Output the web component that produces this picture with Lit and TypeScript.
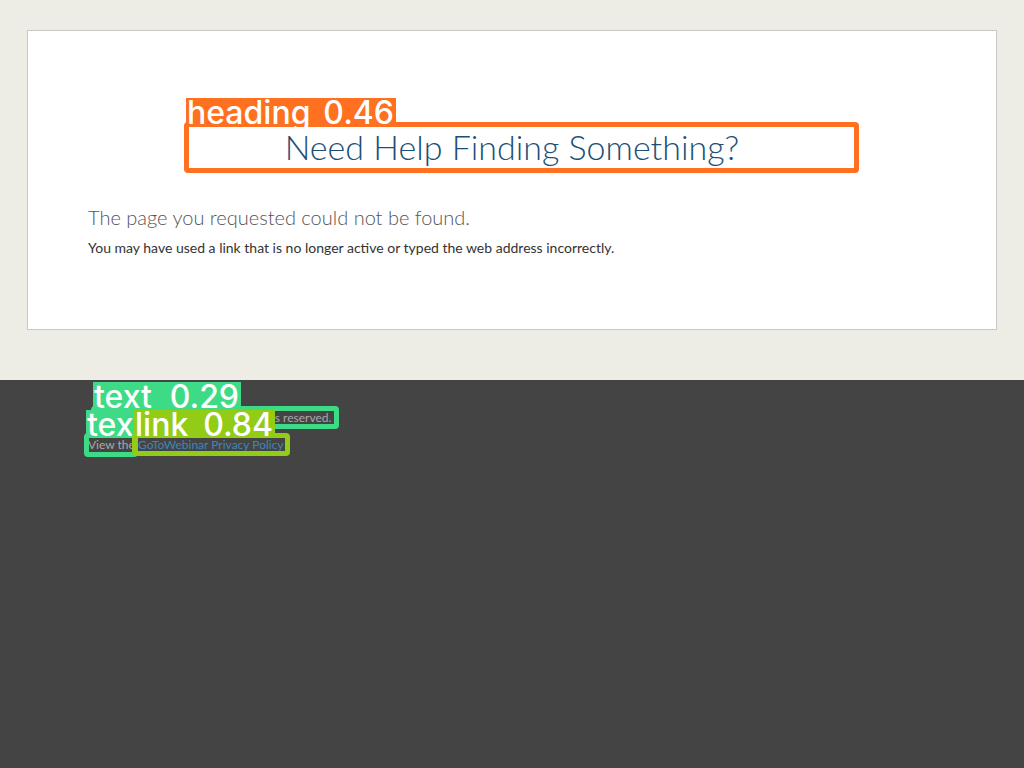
import { LitElement, html, css, nothing } from "lit";
import { customElement, property } from "lit/decorators.js";
import { styleMap } from "lit/directives/style-map.js";

interface Detection {
  name: string;
  score?: string;
  color: string;
  box: [number, number, number, number];
  tag: [number, number, number, number];
}

const detections: Detection[] = [
  { name: "heading", score: "0.46", color: "#ff7020", box: [184, 122, 675, 51], tag: [186, 98, 210, 27] },
  { name: "text", score: "0.29", color: "#3ddb86", box: [91, 406, 248, 23], tag: [93, 382, 148, 27] },
  { name: "text", color: "#3ddb86", box: [84, 433, 54, 24], tag: [86, 410, 148, 27] },
  { name: "link", score: "0.84", color: "#92cc17", box: [132, 433, 158, 23], tag: [134, 410, 141, 27] },
];

const rect = ([x, y, w, h]: number[]) => ({
  left: `${x}px`,
  top: `${y}px`,
  width: `${w}px`,
  height: `${h}px`,
});

@customElement("detection-layer")
export class DetectionLayer extends LitElement {
  @property({ attribute: false }) items: Detection[] = [];

  static styles = css`
    :host {
      position: absolute;
      inset: 0;
      pointer-events: none;
    }
    .box {
      position: absolute;
      box-sizing: border-box;
      border: 5px solid;
      border-radius: 4px;
    }
    .tag {
      position: absolute;
      display: flex;
      justify-content: space-between;
      box-sizing: border-box;
      padding: 0 2px 0 1px;
      color: #fff;
      font: 500 32px/30px Inter, sans-serif;
      white-space: nowrap;
    }
  `;

  render() {
    return this.items.map(
      (d) => html`
        <div class="box" style=${styleMap({ ...rect(d.box), borderColor: d.color })}></div>
        <div class="tag" style=${styleMap({ ...rect(d.tag), background: d.color })}>
          <span>${d.name}</span>${d.score ? html`<span>${d.score}</span>` : nothing}
        </div>
      `
    );
  }
}

@customElement("app-root")
export class AppRoot extends LitElement {
  static styles = css`
    :host {
      position: relative;
      display: flex;
      flex-direction: column;
      min-height: 100vh;
      background: #444;
      font-family: Lato, sans-serif;
    }
    .main {
      padding: 30px 27px 50px;
      background: #eeede5;
    }
    .card {
      padding: 92px 60px 70px;
      border: 1px solid #c8c8c6;
      background: #fff;
    }
    .title {
      margin: 0 0 34px;
      color: #1d4f76;
      font-size: 34px;
      font-weight: 300;
      line-height: 48px;
      text-align: center;
    }
    .lead {
      margin: 0 0 8px;
      color: #555;
      font-size: 20px;
      font-weight: 300;
      line-height: 24px;
    }
    .body {
      margin: 0;
      color: #333;
      font-size: 14px;
      line-height: 22px;
    }
    .footer {
      padding: 28px 88px;
      color: #aaa;
      font-size: 12px;
      line-height: 20px;
    }
    .footer p {
      margin: 0 0 7px;
    }
    .footer a {
      color: #3f86b5;
      text-decoration: none;
    }
  `;

  render() {
    return html`
      <main class="main">
        <section class="card">
          <h1 class="title">Need Help Finding Something?</h1>
          <h2 class="lead">The page you requested could not be found.</h2>
          <p class="body">
            You may have used a link that is no longer active or typed the web address incorrectly.
          </p>
        </section>
      </main>
      <footer class="footer">
        <p>© 2016 Citrix Systems, Inc. All rights reserved.</p>
        <p>View the <a href="#privacy">GoToWebinar Privacy Policy</a></p>
      </footer>
      <detection-layer .items=${detections}></detection-layer>
    `;
  }
}
